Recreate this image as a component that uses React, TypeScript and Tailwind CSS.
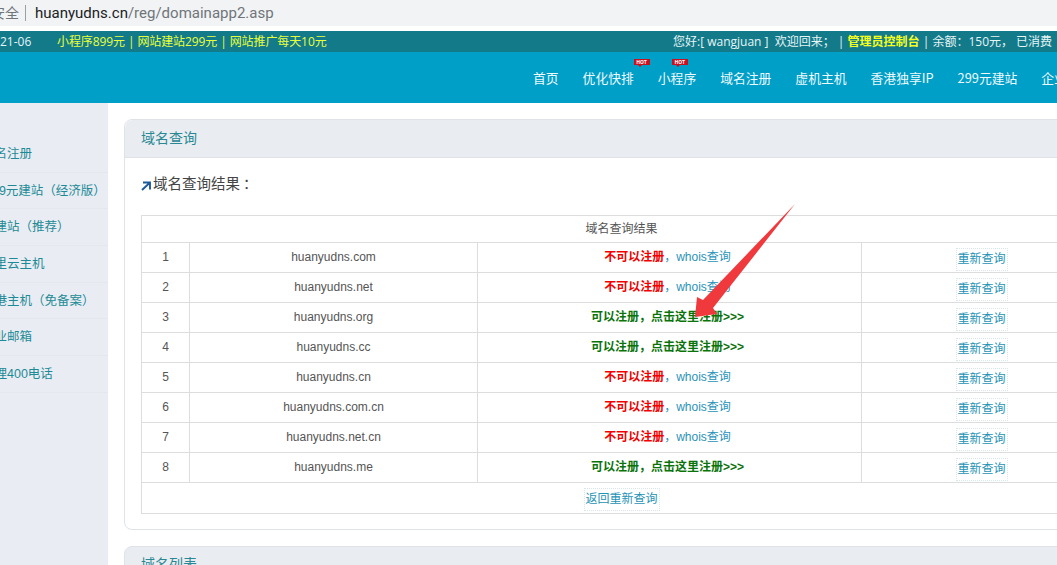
const navItems = [
  { label: "首页" },
  { label: "优化快排", badge: "left-[51px]" },
  { label: "小程序", badge: "left-[14px]" },
  { label: "域名注册" },
  { label: "虚机主机" },
  { label: "香港独享IP" },
  { label: "299元建站" },
  { label: "企业邮箱" },
];

const sideItems = [
  { label: "域名注册", offset: "ml-[-18px]" },
  { label: "299元建站（经济版）", offset: "ml-[-15px]" },
  { label: "云建站（推荐）", offset: "ml-[-18px]" },
  { label: "阿里云主机", offset: "ml-[-18px]" },
  { label: "香港主机（免备案）", offset: "ml-[-18px]" },
  { label: "企业邮箱", offset: "ml-[-18px]" },
  { label: "代理400电话", offset: "ml-[-18px]" },
];

const results = [
  { name: "huanyudns.com", free: false },
  { name: "huanyudns.net", free: false },
  { name: "huanyudns.org", free: true },
  { name: "huanyudns.cc", free: true },
  { name: "huanyudns.cn", free: false },
  { name: "huanyudns.com.cn", free: false },
  { name: "huanyudns.net.cn", free: false },
  { name: "huanyudns.me", free: true },
];

function HotBadge({ className }: { className: string }) {
  return (
    <span className={`absolute top-[-9px] flex h-[6px] w-[16px] items-center justify-center bg-[#c9101f] text-[5px] font-bold leading-none text-white ${className}`}>
      HOT
      <span className="absolute left-[4px] top-[6px] h-0 w-0 border-x-[2px] border-t-[2px] border-x-transparent border-t-[#c9101f]" />
    </span>
  );
}

export default function App() {
  return (
    <div className="relative h-[565px] w-[1057px] overflow-hidden bg-white font-['Liberation_Sans','Noto_Sans_CJK_SC',sans-serif] text-[12px] text-[#555]">
      {/* browser address bar */}
      <div className="flex h-[26px] items-center whitespace-nowrap bg-[#f1f3f4] text-[15px] text-[#70757a]">
        <span className="ml-[-9px] text-[14px]">安全</span>
        <span className="ml-[6px] h-[16px] w-px bg-[#9aa0a6]" />
        <span className="ml-[9px] font-['Roboto','Noto_Sans_CJK_SC',sans-serif]">
          <span className="text-[#202124]">huanyudns.cn</span>/reg/domainapp2.asp
        </span>
      </div>
      <div className="h-[5px] bg-white" />

      {/* top strip */}
      <div className="flex h-[21px] items-center whitespace-nowrap bg-[#137a8a] font-['Open_Sans','Noto_Sans_CJK_SC',sans-serif] text-[12px] text-[#e6f5f5]">
        <div className="flex w-[673px] items-center">
          <span className="w-[57px]">21-06</span>
          <span className="tracking-[-0.1px] text-[#e8ff3c]">小程序899元 | 网站建站299元 | 网站推广每天10元</span>
        </div>
        <div>
          您好:[ wangjuan ]&nbsp; 欢迎回来； | <span className="font-bold text-[#f6ff1e]">管理员控制台</span> | 余额：150元， 已消费
        </div>
      </div>

      {/* main nav */}
      <div className="flex h-[51px] items-center gap-6 whitespace-nowrap bg-[#009fc7] pl-[533px] font-['Noto_Sans_CJK_SC',sans-serif] text-[12.8px] text-[#eef9fc]">
        {navItems.map((item) => (
          <span key={item.label} className="relative shrink-0">
            {item.label}
            {item.badge && <HotBadge className={item.badge} />}
          </span>
        ))}
      </div>

      <div className="flex h-[462px]">
        {/* left menu */}
        <div className="w-[108px] shrink-0 overflow-hidden bg-[#e9edf3] pt-[33px]">
          {sideItems.map((item) => (
            <div
              key={item.label}
              className="flex h-[36.7px] items-center whitespace-nowrap border-b border-[#e3e7ee] pt-px text-[12.5px] text-[#1d8a96]"
            >
              <span className={item.offset}>{item.label}</span>
            </div>
          ))}
        </div>

        {/* content */}
        <div className="w-[994px] shrink-0 pl-4 pt-[16px]">
          <div className="rounded-lg border border-[#dfe3e8]">
            <div className="flex h-[38px] items-center rounded-t-lg border-b border-[#dfe3e8] bg-[#e9edf1] pl-4 text-[14px] text-[#2a8794]">
              域名查询
            </div>
            <div className="px-4 pb-[15px] pt-[18px]">
              <div className="flex h-[18px] items-center text-[14.5px] text-[#444]">
                <svg width="10" height="10" viewBox="0 0 10 10" className="mr-[2px] mt-[2px]">
                  <path d="M2 1.5h7v7M8.5 2 1 9" fill="none" stroke="#1d5a9a" strokeWidth="1.9" />
                </svg>
                域名查询结果
                <span className="ml-[3px]">：</span>
              </div>
              <table className="mt-[21px] w-[960px] table-fixed border-collapse border border-[#dddddd] text-center">
                <colgroup>
                  <col className="w-[48px]" />
                  <col className="w-[288px]" />
                  <col className="w-[384px]" />
                  <col className="w-[240px]" />
                </colgroup>
                <tbody>
                  <tr className="h-[27px] border-b border-[#dddddd]">
                    <td colSpan={4}>域名查询结果</td>
                  </tr>
                  {results.map((r, i) => (
                    <tr key={r.name} className="h-[30px] border-b border-[#dddddd]">
                      <td className="border-r border-[#dddddd] pb-[2px]">{i + 1}</td>
                      <td className="border-r border-[#dddddd] pb-[2px]">{r.name}</td>
                      <td className="border-r border-[#dddddd] pb-[2px] pr-1">
                        {r.free ? (
                          <span className="font-bold text-[#0a730a]">可以注册，点击这里注册&gt;&gt;&gt;</span>
                        ) : (
                          <>
                            <span className="font-bold text-[#f00000]">不可以注册</span>
                            <span className="text-[#2a93b8]">，whois查询</span>
                          </>
                        )}
                      </td>
                      <td>
                        <a className="relative top-[2px] inline-block border border-dotted border-[#d8e6ea] px-px py-[3px] leading-[15px] text-[#1f93b5]">
                          重新查询
                        </a>
                      </td>
                    </tr>
                  ))}
                  <tr className="h-[31px]">
                    <td colSpan={4}>
                      <a className="relative top-px inline-block border border-dotted border-[#d8e6ea] px-px py-[3px] leading-[15px] text-[#1f93b5]">
                        返回重新查询
                      </a>
                    </td>
                  </tr>
                </tbody>
              </table>
            </div>
          </div>

          <div className="mt-4 rounded-t-lg border border-[#dfe3e8] bg-[#e9edf1] py-[7px] pl-4 text-[14px] text-[#2a8794]">
            域名列表
          </div>
        </div>
      </div>

      {/* red annotation arrow drawn over the page */}
      <svg className="absolute left-[690px] top-[200px]" width="110" height="125" viewBox="0 0 110 125">
        <path d="M105 4 23 108 27 114 5 117 7 97 13 100Z" fill="#f0393c" />
      </svg>
    </div>
  );
}
